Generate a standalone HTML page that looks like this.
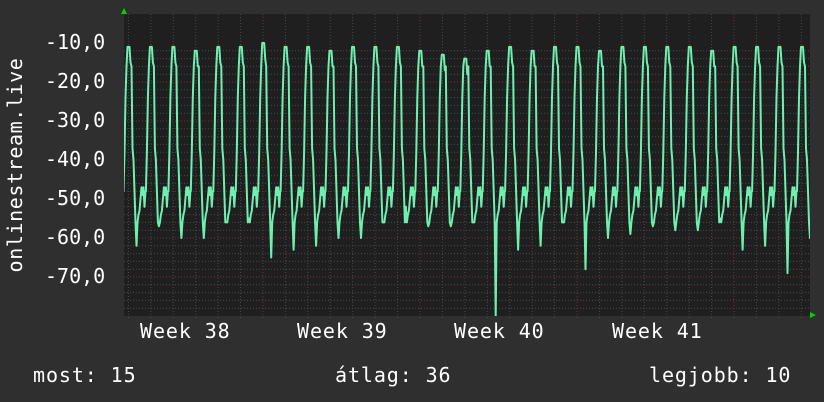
<!DOCTYPE html>
<html><head><meta charset="utf-8"><style>
html,body{margin:0;padding:0;background:#2f2f2f;width:824px;height:402px;overflow:hidden}
.t{position:absolute;color:#fff;font-family:"DejaVu Sans Mono","Liberation Mono",monospace;font-size:20px;white-space:nowrap}
.w{letter-spacing:0.9px}
</style></head><body>
<svg id="g" width="824" height="402" style="position:absolute;left:0;top:0">
<defs><clipPath id="c"><rect x="124" y="14" width="686" height="302"/></clipPath></defs>
<rect x="124" y="14" width="686" height="302" fill="#1f1f1f"/>
<g id="grid"></g>
<path id="d" fill="none" stroke="#6ff0b0" stroke-width="2" stroke-linejoin="round" clip-path="url(#c)"/>
<polygon points="121,14 127,14 124,8" fill="#00d000"/>
<polygon points="810,312 810,318 816,315" fill="#00d000"/>
</svg>
<div class="t" style="left:45px;top:30px">-10,0</div>
<div class="t" style="left:45px;top:69px">-20,0</div>
<div class="t" style="left:45px;top:108px">-30,0</div>
<div class="t" style="left:45px;top:147px">-40,0</div>
<div class="t" style="left:45px;top:186px">-50,0</div>
<div class="t" style="left:45px;top:225px">-60,0</div>
<div class="t" style="left:45px;top:264px">-70,0</div>
<div class="t" style="left:-95px;top:153px;transform:rotate(-90deg);width:220px;text-align:center;letter-spacing:0.6px">onlinestream.live</div>
<div class="t w" style="left:140px;top:319px">Week 38</div>
<div class="t w" style="left:297px;top:319px">Week 39</div>
<div class="t w" style="left:454px;top:319px">Week 40</div>
<div class="t w" style="left:612px;top:319px">Week 41</div>
<div class="t w" style="left:33px;top:363px">most: 15</div>
<div class="t w" style="left:335px;top:363px">átlag: 36</div>
<div class="t w" style="left:649px;top:363px">legjobb: 10</div>
<script>
var g=document.getElementById('grid'),s='';
function Y(v){return 43+(-10-v)*3.9;}
for(var v=-12;v>=-80;v-=2){var y=Y(v);if(y<15||y>315)continue;
 var maj=(v%10===0);
 s+='<line x1="124" x2="810" y1="'+y+'" y2="'+y+'" stroke="'+(maj?'#6a3a3a':'#4a4a4a')+'" stroke-dasharray="1,2"/>';}
for(var x=106;x<810;x+=157/7){if(x<124)continue;
 var maj=Math.abs(((x-106)/157)-Math.round((x-106)/157))<0.01;
 s+='<line y1="14" y2="320" x1="'+x+'" x2="'+x+'" stroke="'+(maj?'#6a3a3a':'#4a4a4a')+'" stroke-dasharray="1,2"/>';}
g.innerHTML=s;
var per=22.45,P0=127.5;
var lows=[-62,-57,-60,-60,-56,-55,-65,-63,-62,-60,-60,-56,-52,-57,-57,-56,-80,-63,-62,-56,-68,-60,-59,-57,-58,-58,-55,-63,-62,-69,-60];
var pk=[-11,-11,-11,-12,-11,-11,-10,-11,-11,-12,-11,-11,-11,-12,-13,-14,-12,-11,-12,-11,-11,-12,-11,-11,-11,-11,-12,-11,-11,-11,-11];
var p=[];
for(var i=-1;i<31;i++){var b=P0+i*per,L=lows[i]!==undefined?lows[i]:-60,H=pk[i]!==undefined?pk[i]:-11;
 var pat=[[-4,-48],[-3,-38],[-2,-24],[-1,-16],[0,H],[2,H],[3,H-4],[4,-16],[5,-37],[6,-40],[7,-48],[8,-56],[9,L],[10,-56],[11,-54],[12,-53],[13,-50],[14,-47],[15,-49],[16,-47],[17,-52],[18,-48]];
 pat.forEach(function(q){var xx=b+q[0];p.push(xx.toFixed(1)+','+Y(q[1]).toFixed(1));});}
document.getElementById('d').setAttribute('d','M'+p.join('L'));
</script>
</body></html>
